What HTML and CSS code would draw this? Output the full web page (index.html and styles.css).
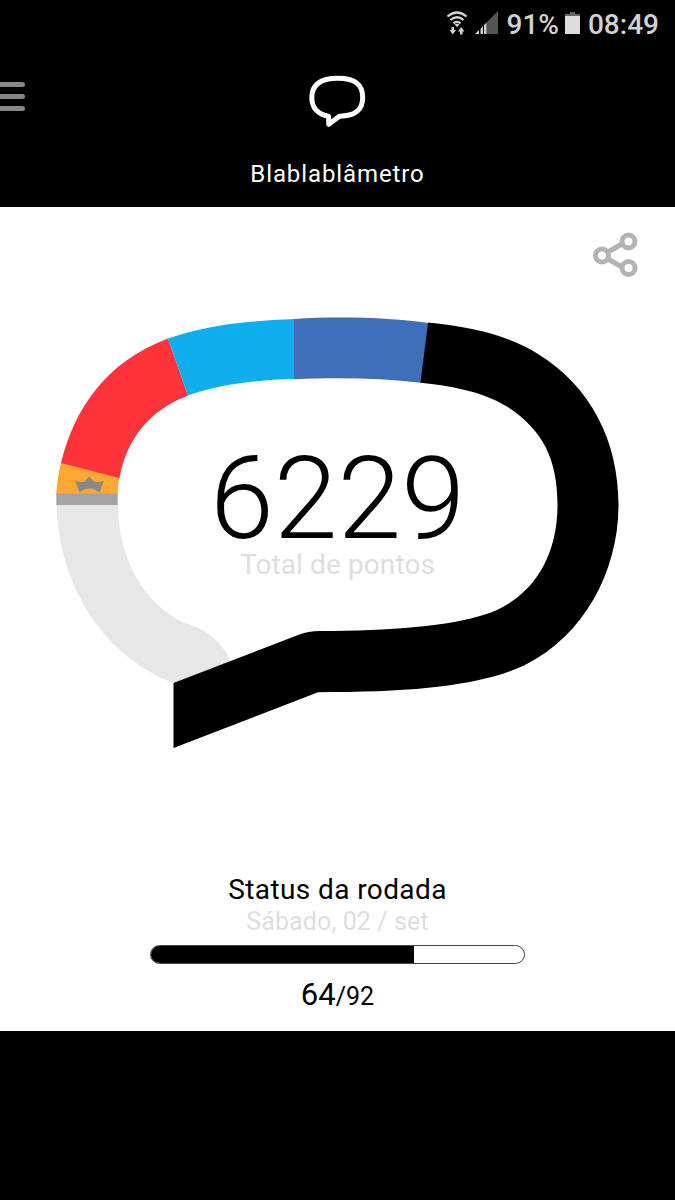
FILE: index.html
```html
<!DOCTYPE html>
<html lang="pt-BR">
<head>
    <meta charset="UTF-8">
    <meta name="viewport" content="width=device-width, initial-scale=1.0">
    <title>Blablablâmetro</title>
    <link rel="stylesheet" href="styles.css">
</head>
<body>
    <div class="statusbar">
        <svg class="wifi" width="22" height="26" viewBox="0 0 22 26">
            <g fill="none" stroke="#d2d2d2" stroke-width="2.200">
                <path d="M1.500 5.500Q11 -2.500 20.500 5.500"/>
                <path d="M4.500 9Q11 3.500 17.500 9"/>
                <path d="M7.500 12.300Q11 9.300 14.500 12.300"/>
            </g>
            <path fill="#d2d2d2" d="M8.500 13.500Q11 11.800 13.500 13.500L11 16zM5.500 16h2.500v3h2l-3.200 4.500-3.200-4.500h1.900zM16.500 23.500h-2.500v-3h-2l3.200-4.500 3.200 4.500h-1.900z"/>
        </svg>
        <svg class="signal" width="24" height="24" viewBox="0 0 24 24">
            <path fill="#555" d="M24 0V23H12.500V11.500z"/>
            <path fill="#d2d2d2" d="M1 23L5 19V23zM6.500 23V18L9 15V23zM10 23V14L12.500 11.500V23z"/>
        </svg>
        <span class="percent">91%</span>
        <svg class="battery" width="15" height="24" viewBox="0 0 15 24">
            <path fill="#666" d="M5 1h5v2h5v3H0V3h5z"/>
            <path fill="#dcdcdc" d="M0 5h15v18H0z"/>
        </svg>
        <span class="clock">08:49</span>
    </div>
    <div class="header">
        <div class="menu">
            <div class="line"></div>
            <div class="line"></div>
            <div class="line"></div>
        </div>
        <svg class="logo" width="60" height="54" viewBox="0 0 60 54">
            <path fill="none" stroke="#fff" stroke-width="5" stroke-linejoin="round" d="M30 3.300C44 3.300 54.700 7.500 54.700 22.500C54.700 36 46 41 31.500 41.300L20.800 49.300L20.500 41.300C10 39.500 3.800 33 3.800 22.500C3.800 7.500 16 3.300 30 3.300z"/>
        </svg>
        <div class="title">Blablablâmetro</div>
    </div>
    <div class="card">
        <svg class="share" width="48" height="48" viewBox="0 0 48 48">
            <g fill="none" stroke="#b3b3b3" stroke-width="5">
                <path d="M16 21L30 13M16 28L30 36"/>
                <circle cx="10" cy="24.500" r="6.500"/>
                <circle cx="36.500" cy="10.500" r="6.500"/>
                <circle cx="36.500" cy="37" r="6.500"/>
            </g>
        </svg>
        <div class="gauge">
            <svg width="565" height="434" viewBox="55 316 565 434">
                <path fill="#e7e7e7" d="M56.500 504C58 575 95 652 173 683L200 690L230 661C226 648 213 634 196 627C150 613 118 565 118 504z"/>
                <path fill="#a4a4a4" d="M56.300 493H117.700V505H56.300z"/>
                <path fill="#fea733" d="M61 462.500C58 475 57 485 56.300 493.500H117.600C117.800 487 118.500 482 119.500 477z"/>
                <path fill="#ff343a" d="M168 338.500C105 362 74 410 61 463L119.500 478C127 438 150 410 188 395.500z"/>
                <path fill="#0dafee" d="M294.500 319C240 321 205 326 168 338.500L188 395.500C220 384 255 380 295 379z"/>
                <path fill="#3f6fb9" d="M428.500 323C395 318 340 316 294 319V379.200C340 377.500 380 378 421 382.800z"/>
                <path d="M428 322.500C473 327 510 336 538 354C590 386 618.500 440 618.500 505C618.500 570 585 635 525 665C490 682 430 692 333 692L318 692.200L173.500 748V683L298 635Q308 631 320 631C390 631 450 626 485 614.500C530 600 557.500 560 557.500 505C557.500 458 542 429 506 406C481 391 450 386 420.500 382.800z"/>
                <path fill="#888" d="M75 480.500Q80 483 84.500 481.500L89.300 476.500L94 481.500Q99 483 103.800 480.500L99.500 492.500Q89 484.500 79.500 492.500z"/>
            </svg>
            <div class="score">
                <div class="points">6229</div>
                <div class="label">Total de pontos</div>
            </div>
        </div>
        <div class="round">
            <div class="round-title">Status da rodada</div>
            <div class="date">Sábado, 02 / set</div>
            <div class="bar">
                <div class="fill" style="width: 70.500%"></div>
            </div>
            <div class="count"><span class="done">64</span><span class="total">/92</span></div>
        </div>
    </div>
</body>
</html>
```

FILE: styles.css
```css
body {
    margin: 0;
    background-color: black;
    font-family: Roboto, sans-serif;
}
svg {
    display: block;
}
.statusbar {
    display: flex;
    justify-content: flex-end;
    height: 48px;
    padding-right: 16px;
    padding-top: 11px;
    box-sizing: border-box;
    color: #d2d2d2;
    font-size: 28px;
    font-weight: 500;
    line-height: 27px;
}
.signal {
    margin-left: 6px;
    margin-right: 9px;
}
.battery {
    margin-left: 6px;
    margin-right: 8px;
}
.header {
    position: relative;
    height: 159px;
    color: white;
    text-align: center;
}
.menu {
    position: absolute;
    left: 0;
    top: 34px;
}
.line {
    width: 25px;
    height: 5px;
    margin-bottom: 7px;
    background-color: #868686;
    border-radius: 0 3px 3px 0;
}
.logo {
    margin: 0 auto;
    padding-top: 27px;
}
.title {
    margin-top: 31px;
    font-size: 24px;
    line-height: 28px;
    letter-spacing: 0.9px;
}
.card {
    display: flex;
    flex-direction: column;
    height: 824px;
    background-color: white;
    color: black;
}
.share {
    align-self: flex-end;
    margin-top: 24px;
    margin-right: 35px;
}
.gauge {
    position: relative;
    width: 565px;
    margin-top: 37px;
    margin-left: 55px;
}
.score {
    position: absolute;
    left: 0;
    right: 0;
    top: 128px;
    text-align: center;
}
.points {
    font-size: 115px;
    font-weight: 300;
    line-height: 110px;
}
.label {
    font-size: 28px;
    line-height: 32px;
    letter-spacing: 0.1px;
    margin-top: -5px;
    color: #dedede;
}
.round {
    display: flex;
    flex-direction: column;
    align-items: center;
    margin-top: 124px;
}
.round-title {
    font-size: 28px;
    line-height: 32px;
    letter-spacing: 0.4px;
}
.date {
    font-size: 25px;
    line-height: 32px;
    letter-spacing: 0.1px;
    color: #dedede;
}
.bar {
    width: 375px;
    height: 19px;
    margin-top: 7px;
    box-sizing: border-box;
    border: 1px solid #444;
    border-radius: 10px;
    overflow: hidden;
}
.fill {
    height: 100%;
    background-color: black;
}
.count {
    margin-top: 13px;
    line-height: 36px;
}
.done {
    font-size: 31px;
}
.total {
    font-size: 25px;
}
```
